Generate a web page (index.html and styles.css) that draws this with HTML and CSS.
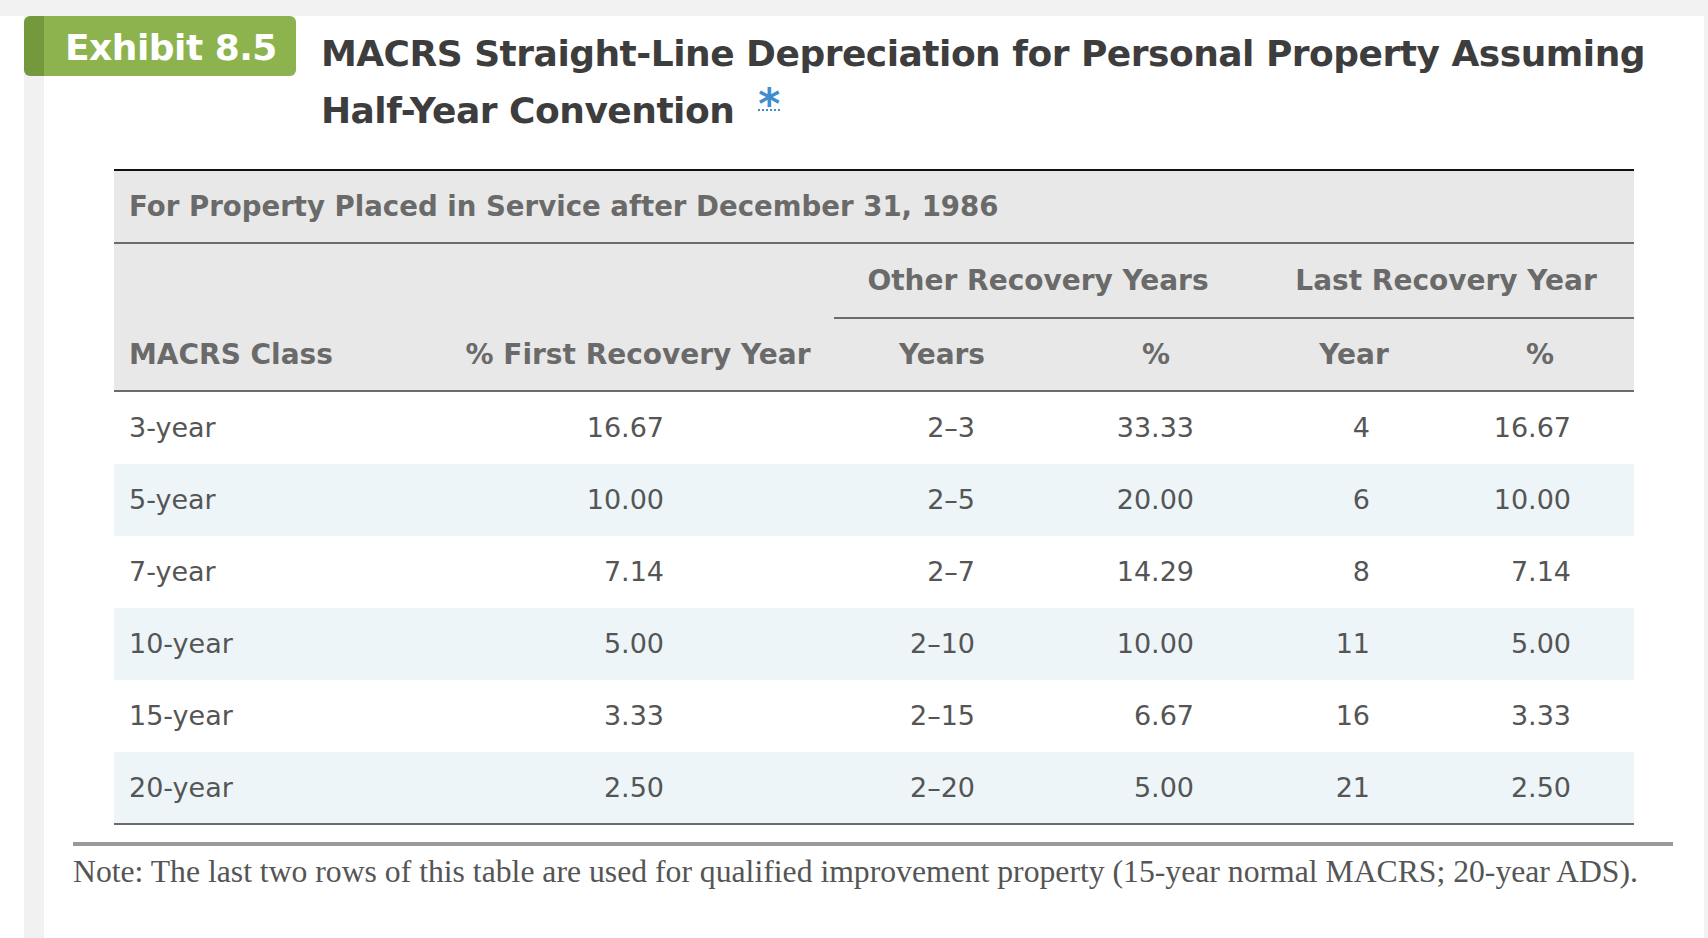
FILE: index.html
```html
<!DOCTYPE html>
<html lang="en">
<head>
<meta charset="utf-8">
<title>Exhibit 8.5 – MACRS Straight-Line Depreciation</title>
<link rel="stylesheet" href="styles.css">
</head>
<body>
<div class="frame">
  <section class="exhibit">
    <header class="head">
      <div class="badge">Exhibit 8.5</div>
      <h1 class="title"><span class="t-line">MACRS Straight-Line Depreciation for Personal Property Assuming</span> <span class="t-line">Half-Year Convention</span><a class="fn" href="#note">*</a></h1>
    </header>

    <table class="macrs">
      <colgroup>
        <col class="c1"><col class="c2"><col class="c3"><col class="c4"><col class="c5"><col class="c6">
      </colgroup>
      <thead>
        <tr>
          <th class="cap" colspan="6">For Property Placed in Service after December 31, 1986</th>
        </tr>
        <tr>
          <th class="hd left" rowspan="2">MACRS Class</th>
          <th class="hd" rowspan="2">% First Recovery Year</th>
          <th class="grp" colspan="2">Other Recovery Years</th>
          <th class="grp grp-last" colspan="2">Last Recovery Year</th>
        </tr>
        <tr>
          <th class="hd sub s3">Years</th>
          <th class="hd sub s4">%</th>
          <th class="hd sub s5">Year</th>
          <th class="hd sub s6">%</th>
        </tr>
      </thead>
      <tbody>
        <tr><td class="v1">3-year</td><td class="v2">16.67</td><td class="v3">2–3</td><td class="v4">33.33</td><td class="v5">4</td><td class="v6">16.67</td></tr>
        <tr class="alt"><td class="v1">5-year</td><td class="v2">10.00</td><td class="v3">2–5</td><td class="v4">20.00</td><td class="v5">6</td><td class="v6">10.00</td></tr>
        <tr><td class="v1">7-year</td><td class="v2">7.14</td><td class="v3">2–7</td><td class="v4">14.29</td><td class="v5">8</td><td class="v6">7.14</td></tr>
        <tr class="alt"><td class="v1">10-year</td><td class="v2">5.00</td><td class="v3">2–10</td><td class="v4">10.00</td><td class="v5">11</td><td class="v6">5.00</td></tr>
        <tr><td class="v1">15-year</td><td class="v2">3.33</td><td class="v3">2–15</td><td class="v4">6.67</td><td class="v5">16</td><td class="v6">3.33</td></tr>
        <tr class="alt last"><td class="v1">20-year</td><td class="v2">2.50</td><td class="v3">2–20</td><td class="v4">5.00</td><td class="v5">21</td><td class="v6">2.50</td></tr>
      </tbody>
    </table>

    <p class="note" id="note">Note: The last two rows of this table are used for qualified improvement property (15-year normal MACRS; 20-year ADS).</p>
  </section>
</div>
</body>
</html>
```

FILE: styles.css
```css
html, body {
  margin: 0;
  padding: 0;
  background: #ffffff;
}

.frame {
  border-top: 16px solid #f2f2f2;
  min-height: calc(100vh - 16px);
  display: flex;
  flex-direction: column;
}

.exhibit {
  flex: 1;
  margin-left: 24px;
  border-left: 20px solid #f1f1f1;
  border-right: 4px solid #f2f2f2;
  background: #ffffff;
  font-family: "DejaVu Sans", Verdana, sans-serif;
}

/* ---------- heading ---------- */
.head {
  display: flex;
  align-items: flex-start;
  gap: 25px;
  margin-left: -20px;
}

.badge {
  flex: none;
  box-sizing: border-box;
  height: 60px;
  padding: 5px 19px 1px 21px;
  background: #8db34f;
  border-left: 20px solid #74993c;
  border-radius: 6px;
  color: #ffffff;
  font-weight: bold;
  font-size: 36px;
  line-height: 54px;
  letter-spacing: -0.5px;
  white-space: nowrap;
}

.title {
  flex: 1;
  margin: 9px 0 0;
  color: #3d3d3d;
  font-weight: bold;
  font-size: 36px;
  line-height: 57px;
  letter-spacing: -0.5px;
}

.t-line {
  white-space: nowrap;
}

.fn {
  display: inline-block;
  margin-left: 24px;
  font-size: 42px;
  line-height: 9px;
  vertical-align: 4px;
  color: #3f8ccf;
  text-decoration: none;
  border-bottom: 2px dotted #3f8ccf;
  letter-spacing: 0;
}

/* ---------- table ---------- */
.macrs {
  table-layout: fixed;
  width: 1520px;
  margin: 30px 0 0 70px;
  border-collapse: separate;
  border-spacing: 0;
  border-top: 2px solid #111111;
}

.c1 { width: 328px; }
.c2 { width: 392px; }
.c3 { width: 204px; }
.c4 { width: 204px; }
.c5 { width: 196px; }
.c6 { width: 196px; }

.macrs th {
  background: #e8e8e8;
  color: #6a6a6a;
  font-weight: bold;
  font-size: 28px;
  line-height: 35px;
  padding: 0;
  text-align: center;
  white-space: nowrap;
}

.macrs .cap {
  text-align: left;
  font-size: 27.6px;
  padding: 18px 15px;
  border-bottom: 2px solid #6b6b6b;
}

.macrs .grp {
  padding: 19px 0 19px 0;
  border-bottom: 2px solid #6b6b6b;
}

.macrs .grp-last {
  padding-left: 16px;
}

.macrs .hd {
  vertical-align: bottom;
  padding-bottom: 18px;
  border-bottom: 2px solid #6b6b6b;
}

.macrs .sub {
  padding-top: 18px;
}

.macrs .left {
  text-align: left;
  padding-left: 15px;
}

.macrs .s3 { padding-left: 12px; }
.macrs .s4 { padding-left: 32px; }
.macrs .s5 { padding-left: 28px; }
.macrs .s6 { padding-left: 8px; }

.macrs td {
  color: #555555;
  font-size: 27px;
  line-height: 36px;
  padding: 18px 0;
  text-align: right;
  white-space: nowrap;
}

.macrs .alt td {
  background: #edf5f9;
}

.macrs .last td {
  padding-bottom: 17px;
  border-bottom: 2px solid #6b6b6b;
}

.macrs .v1 { text-align: left; padding-left: 15px; }
.macrs .v2 { padding-right: 170px; }
.macrs .v3 { padding-right: 63px; }
.macrs .v4 { padding-right: 48px; }
.macrs .v5 { padding-right: 68px; }
.macrs .v6 { padding-right: 63px; }

/* ---------- note ---------- */
.note {
  margin: 17px 31px 0 29px;
  padding-top: 8px;
  border-top: 4px solid #999999;
  color: #555555;
  font-family: "Liberation Serif", "Times New Roman", serif;
  font-size: 31.7px;
  line-height: 36px;
}
```
